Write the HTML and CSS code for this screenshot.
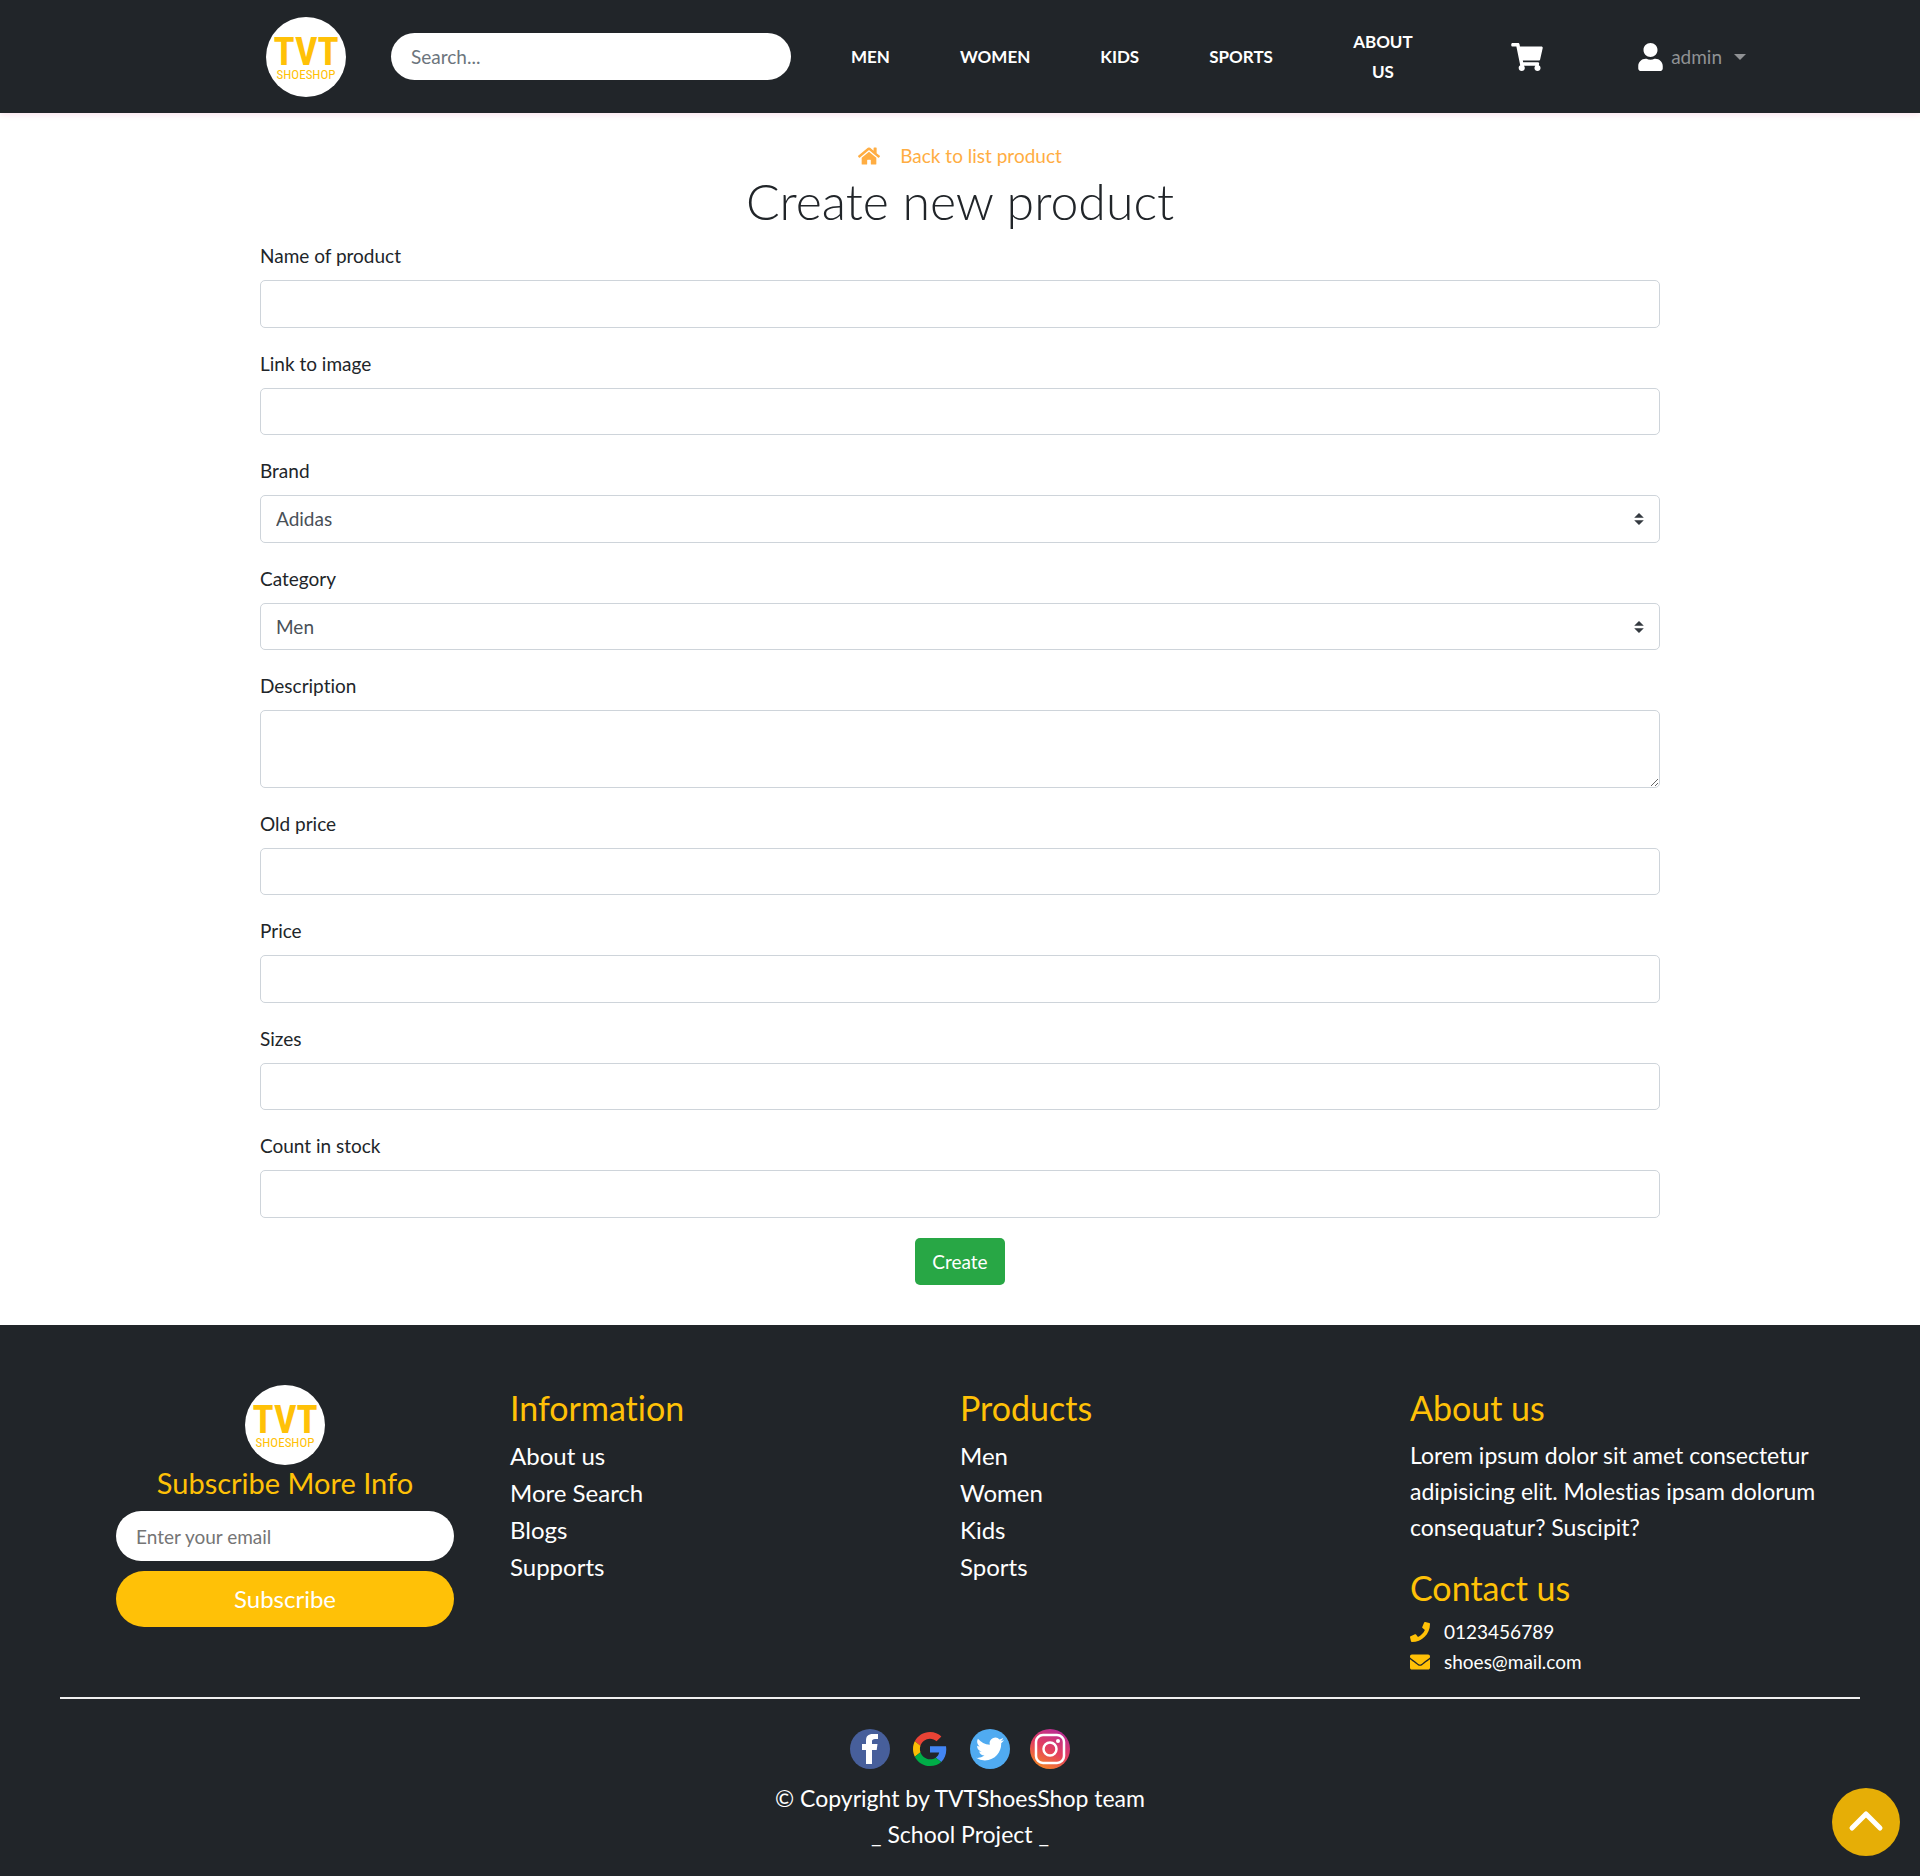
FILE: index.html
```html
<!DOCTYPE html>
<html lang="en">
<head>
<meta charset="utf-8">
<meta name="viewport" content="width=device-width, initial-scale=1">
<title>TVT ShoeShop - Create new product</title>
<link rel="stylesheet" href="styles.css">
</head>
<body>
<header class="site-header">
  <div class="header-inner">
    <a class="logo" href="#" aria-label="TVT Shoeshop home">
      <svg viewBox="0 0 80 80" width="80" height="80"><circle cx="40" cy="40" r="40" fill="#fff"/><text class="logo-main" x="40" y="48">TVT</text><text class="logo-sub" x="40" y="62">SHOESHOP</text></svg>
    </a>
    <form class="search"><input class="pill" type="search" placeholder="Search..." aria-label="Search"></form>
    <nav class="nav">
      <a href="#">MEN</a>
      <a href="#">WOMEN</a>
      <a href="#">KIDS</a>
      <a href="#">SPORTS</a>
      <a href="#" class="nav-about">ABOUT US</a>
    </nav>
    <a class="cart" href="#" aria-label="Cart">
      <svg viewBox="0 0 576 512" width="32" height="28" fill="#fff"><path d="M528.12 301.319l47.273-208C578.806 78.301 567.391 64 551.99 64H159.208l-9.166-44.81C147.758 8.021 137.93 0 126.529 0H24C10.745 0 0 10.745 0 24v16c0 13.255 10.745 24 24 24h69.883l70.248 343.435C147.325 417.1 136 435.222 136 456c0 30.928 25.072 56 56 56s56-25.072 56-56c0-15.674-6.447-29.835-16.824-40h209.647C430.447 426.165 424 440.326 424 456c0 30.928 25.072 56 56 56s56-25.072 56-56c0-22.172-12.888-41.332-31.579-50.405l5.517-24.276c3.413-15.018-8.002-29.319-23.403-29.319H218.117l-6.545-32h293.145c11.206 0 20.92-7.754 23.403-18.681z"/></svg>
    </a>
    <button class="user" type="button">
      <svg viewBox="0 0 448 512" width="25" height="28" fill="#fff"><path d="M224 256c70.700 0 128-57.300 128-128S294.700 0 224 0 96 57.300 96 128s57.300 128 128 128zm89.600 32h-16.700c-22.200 10.200-46.900 16-72.900 16s-50.600-5.800-72.900-16h-16.700C60.200 288 0 348.200 0 422.400V464c0 26.500 21.500 48 48 48h352c26.500 0 48-21.500 48-48v-41.600c0-74.200-60.200-134.400-134.400-134.400z"/></svg>
      <span>admin</span>
      <span class="caret"></span>
    </button>
  </div>
</header>

<main class="content">
  <a class="back" href="#">
    <svg viewBox="0 0 576 512" width="22" height="20" fill="#ffad42"><path d="M280.370 148.260L96 300.110V464a16 16 0 0 0 16 16l112.060-.290a16 16 0 0 0 15.920-16V368a16 16 0 0 1 16-16h64a16 16 0 0 1 16 16v95.640a16 16 0 0 0 16 16.050L464 480a16 16 0 0 0 16-16V300L295.670 148.260a12.190 12.190 0 0 0-15.300 0zM571.600 251.470L488 182.560V44.050a12 12 0 0 0-12-12h-56a12 12 0 0 0-12 12v72.610L318.470 43a48 48 0 0 0-61 0L4.340 251.470a12 12 0 0 0-1.600 16.900l25.500 31A12 12 0 0 0 45.150 301l235.220-193.740a12.190 12.190 0 0 1 15.300 0L530.900 301a12 12 0 0 0 16.900-1.600l25.500-31a12 12 0 0 0-1.700-16.930z"/></svg>
    <span>Back to list product</span>
  </a>
  <h1>Create new product</h1>
  <form class="product-form">
    <div class="field"><label for="name">Name of product</label><input class="control tall" id="name" type="text"></div>
    <div class="field"><label for="image">Link to image</label><input class="control" id="image" type="text"></div>
    <div class="field"><label for="brand">Brand</label><select class="control tall" id="brand"><option>Adidas</option></select></div>
    <div class="field"><label for="category">Category</label><select class="control" id="category"><option>Men</option></select></div>
    <div class="field"><label for="description">Description</label><textarea class="control" id="description" rows="2"></textarea></div>
    <div class="field"><label for="old-price">Old price</label><input class="control" id="old-price" type="text"></div>
    <div class="field"><label for="price">Price</label><input class="control tall" id="price" type="text"></div>
    <div class="field"><label for="sizes">Sizes</label><input class="control" id="sizes" type="text"></div>
    <div class="field"><label for="stock">Count in stock</label><input class="control tall" id="stock" type="text"></div>
    <button class="create" type="submit">Create</button>
  </form>
</main>

<footer class="site-footer">
  <div class="columns">
    <form class="subscribe">
      <svg viewBox="0 0 80 80" width="80" height="80" role="img" aria-label="TVT Shoeshop"><circle cx="40" cy="40" r="40" fill="#fff"/><text class="logo-main" x="40" y="48">TVT</text><text class="logo-sub" x="40" y="62">SHOESHOP</text></svg>
      <h3>Subscribe More Info</h3>
      <input class="pill" type="email" placeholder="Enter your email" aria-label="Email">
      <button type="submit">Subscribe</button>
    </form>
    <section>
      <h2>Information</h2>
      <ul><li><a href="#">About us</a></li><li><a href="#">More Search</a></li><li><a href="#">Blogs</a></li><li><a href="#">Supports</a></li></ul>
    </section>
    <section>
      <h2>Products</h2>
      <ul><li><a href="#">Men</a></li><li><a href="#">Women</a></li><li><a href="#">Kids</a></li><li><a href="#">Sports</a></li></ul>
    </section>
    <section>
      <h2>About us</h2>
      <p class="about">Lorem ipsum dolor sit amet consectetur adipisicing elit. Molestias ipsam dolorum consequatur? Suscipit?</p>
      <h2>Contact us</h2>
      <p class="contact"><svg viewBox="0 0 512 512" width="20" height="20" fill="#ffc107"><path d="M493.400 24.600l-104-24c-11.300-2.600-22.900 3.300-27.500 13.900l-48 112c-4.200 9.800-1.400 21.300 6.900 28l60.600 49.600c-36 76.700-98.900 140.500-177.200 177.200l-49.600-60.600c-6.800-8.300-18.200-11.100-28-6.900l-112 48C3.900 366.500-2 378.100.6 389.400l24 104C27.100 504.200 36.700 512 48 512c256.100 0 464-207.500 464-464 0-11.200-7.700-20.900-18.600-23.400z"/></svg>0123456789</p>
      <p class="contact"><svg viewBox="0 0 512 512" width="20" height="20" fill="#ffc107"><path d="M502.300 190.800c3.900-3.100 9.700-.2 9.700 4.700V400c0 26.500-21.500 48-48 48H48c-26.500 0-48-21.500-48-48V195.600c0-5 5.700-7.800 9.700-4.700 22.400 17.400 52.100 39.500 154.100 113.600 21.100 15.400 56.700 47.800 92.200 47.600 35.700.3 72-32.800 92.300-47.600 102-74.100 131.600-96.300 154-113.700zM256 320c23.200.4 56.600-29.200 73.400-41.400 132.700-96.300 142.800-104.700 173.400-128.700 5.800-4.500 9.200-11.500 9.200-18.900v-19c0-26.500-21.500-48-48-48H48c-26.500 0-48 21.500-48 48v19c0 7.400 3.400 14.300 9.200 18.900 30.600 23.900 40.700 32.400 173.400 128.700 16.800 12.200 50.200 41.800 73.400 41.400z"/></svg>shoes@mail.com</p>
    </section>
  </div>
  <div class="footer-bottom">
    <div class="social">
      <a href="#" aria-label="Facebook"><svg viewBox="0 0 40 40" width="40" height="40"><circle cx="20" cy="20" r="20" fill="#475f9b"/><path fill="#fff" d="M16 35V21h-4v-6h4v-3c0-5 2-7 7-7h5v5h-3c-2 0-3 1-3 2v3h5.500l-.8 6H22v14z"/></svg></a>
      <a href="#" aria-label="Google"><svg viewBox="0 0 40 40" width="40" height="40"><g transform="translate(3 3) scale(.7083)"><path fill="#ea4335" d="M24 9.500c3.540 0 6.710 1.220 9.210 3.600l6.850-6.850C35.900 2.380 30.470 0 24 0 14.620 0 6.510 5.380 2.560 13.220l7.980 6.190C12.430 13.720 17.740 9.500 24 9.500z"/><path fill="#4285f4" d="M46.980 24.550c0-1.570-.15-3.090-.38-4.550H24v9.020h12.940c-.58 2.960-2.260 5.480-4.780 7.180l7.730 6c4.510-4.180 7.090-10.360 7.090-17.650z"/><path fill="#fbbc05" d="M10.530 28.590c-.48-1.450-.76-2.990-.76-4.590s.27-3.140.76-4.590l-7.980-6.190C.92 16.460 0 20.120 0 24c0 3.880.92 7.540 2.560 10.780l7.970-6.190z"/><path fill="#00ac47" d="M24 48c6.480 0 11.930-2.130 15.890-5.810l-7.730-6c-2.150 1.450-4.920 2.300-8.160 2.300-6.260 0-11.570-4.220-13.470-9.910l-7.980 6.190C6.510 42.620 14.620 48 24 48z"/></g></svg></a>
      <a href="#" aria-label="Twitter"><svg viewBox="0 0 40 40" width="40" height="40"><circle cx="20" cy="20" r="20" fill="#50abf1"/><path fill="#fff" transform="translate(6 6) scale(1.17)" d="M23.950 4.570a10 10 0 0 1-2.820.77 4.960 4.960 0 0 0 2.160-2.720c-.95.55-2 .96-3.130 1.180a4.920 4.920 0 0 0-8.380 4.480C7.690 8.090 4.070 6.130 1.640 3.160a4.820 4.820 0 0 0-.67 2.480c0 1.710.87 3.210 2.190 4.100a4.900 4.900 0 0 1-2.230-.62v.06a4.920 4.920 0 0 0 3.950 4.830 5 5 0 0 1-2.210.08 4.940 4.940 0 0 0 4.600 3.420A9.870 9.870 0 0 1 0 19.540a14 14 0 0 0 7.550 2.210c9.050 0 14-7.500 14-13.980 0-.21 0-.42-.02-.63a9.940 9.940 0 0 0 2.460-2.550z"/></svg></a>
      <a href="#" aria-label="Instagram"><svg viewBox="0 0 40 40" width="40" height="40"><defs><linearGradient id="insta" x1=".2" y1="1" x2=".7" y2="0"><stop offset="0" stop-color="#f78b20"/><stop offset=".5" stop-color="#e4405f"/><stop offset="1" stop-color="#b72c96"/></linearGradient></defs><circle cx="20" cy="20" r="20" fill="url(#insta)"/><g fill="none" stroke="#fff" stroke-width="2.500"><rect x="6" y="6" width="28" height="28" rx="7"/><circle cx="20" cy="20" r="6.500"/></g><circle cx="28" cy="12" r="2" fill="#fff"/></svg></a>
    </div>
    <p>© Copyright by TVTShoesShop team<br>_ School Project _</p>
  </div>
</footer>
<button class="to-top" type="button" aria-label="Back to top"><svg viewBox="0 0 68 68" width="68" height="68"><path d="M20 40l14-14 14 14" fill="none" stroke="#fff" stroke-width="5" stroke-linecap="round" stroke-linejoin="round"/></svg></button>
</body>
</html>
```

FILE: styles.css
```css
*, *::before, *::after { box-sizing: border-box; }
body {
  margin: 0;
  font: 400 19px/30px Lato, "Open Sans", sans-serif;
  font-variant-ligatures: none;
  color: #212529;
  background: #fff;
}
a { color: inherit; text-decoration: none; }
button, input, select, textarea { font: inherit; color: inherit; }
h1, h2, h3, p, ul { margin: 0; padding: 0; font-weight: inherit; }
svg { display: block; flex: none; }

.logo-main, .logo-sub { font-family: "Liberation Sans Narrow", "Roboto Condensed", sans-serif; fill: #ffc107; text-anchor: middle; }
.logo-main { font-size: 39px; font-weight: 700; }
.logo-sub { font-size: 13px; }

.pill { width: 100%; border: 0; border-radius: 25px; padding: 0 20px; background: #fff; outline: 0; appearance: none; }
.pill::placeholder { color: #6c757d; opacity: 1; }

/* Header */
.site-header { background: #212529; box-shadow: 0 2px 6px #fbe4ee; }
.header-inner {
  display: flex;
  align-items: center;
  max-width: 1580px;
  min-height: 113px;
  margin: 0 auto;
  padding: 0 4px 0 96px;
}
.search { flex: 0 1 400px; margin-left: 45px; }
.search .pill { display: block; height: 47px; }
.nav { display: flex; align-items: center; margin-left: 60px; gap: 70px; color: #fff; font-size: 17px; font-weight: 700; text-align: center; }
.nav-about { width: 80px; }
.cart { margin-left: auto; }
.user { display: flex; align-items: center; gap: 8px; margin: 0 0 0 95px; padding: 0; border: 0; background: none; color: #909294; }
.caret { margin-left: 4px; border: 6px solid transparent; border-top-color: currentColor; border-bottom: 0; }

/* Product form */
.content { max-width: 1440px; margin: 0 auto; padding: 28px 20px 40px; }
.back { display: flex; justify-content: center; align-items: center; gap: 20px; color: #ffad42; }
h1 { font-size: 50px; font-weight: 300; line-height: 60px; text-align: center; margin-bottom: 10px; }
.product-form { display: flex; flex-direction: column; gap: 20px; }
.field { display: flex; flex-direction: column; gap: 9px; }
.field + .field { padding-top: 1px; }
.control { width: 100%; height: 47px; padding: 0 15px; border: 1px solid #ced4da; border-radius: 5px; background-color: #fff; color: #495057; outline: 0; }
.control.tall { height: 48px; }
textarea.control { display: block; height: 78px; padding: 8px 15px; resize: vertical; }
select.control {
  appearance: none;
  background: #fff url("data:image/svg+xml,%3csvg xmlns='http://www.w3.org/2000/svg' viewBox='0 0 4 5'%3e%3cpath fill='%23343a40' d='M2 0L0 2h4zm0 5L0 3h4z'/%3e%3c/svg%3e") no-repeat right 15px center / 10px 12px;
}
.create { align-self: center; height: 47px; padding: 0 17px; border: 0; border-radius: 5px; background: #28a745; color: #fff; }

/* Footer */
.site-footer { padding: 60px 60px 25px; background: #212529; color: #fff; }
.columns { display: grid; grid-template-columns: repeat(4, 1fr); padding-bottom: 20px; border-bottom: 2px solid #f0f0f0; }
.subscribe { display: flex; flex-direction: column; align-items: center; padding: 0 56px; }
.subscribe h3 { font-size: 29px; line-height: 36px; color: #ffc107; margin-bottom: 10px; }
.subscribe .pill { height: 50px; margin-bottom: 10px; }
.subscribe .pill::placeholder { color: #757575; }
.subscribe button { width: 100%; height: 56px; border: 0; border-radius: 28px; background: #ffc107; color: #fff; font-size: 24px; }
.columns section { padding-top: 2px; padding-right: 30px; }
.columns h2 { margin-bottom: 8px; font-size: 34px; line-height: 42px; color: #ffc107; }
.columns ul { list-style: none; font-size: 24px; line-height: 37px; }
.about { margin-bottom: 22px; font-size: 23px; line-height: 36px; }
.contact { display: flex; align-items: center; gap: 14px; }
.footer-bottom { padding-top: 30px; text-align: center; font-size: 23px; line-height: 36px; }
.social { display: flex; justify-content: center; gap: 20px; margin-bottom: 11px; }
.to-top { position: fixed; right: 20px; bottom: 20px; width: 68px; height: 68px; padding: 0; border: 0; border-radius: 50%; background: #e6ae06; }
```
